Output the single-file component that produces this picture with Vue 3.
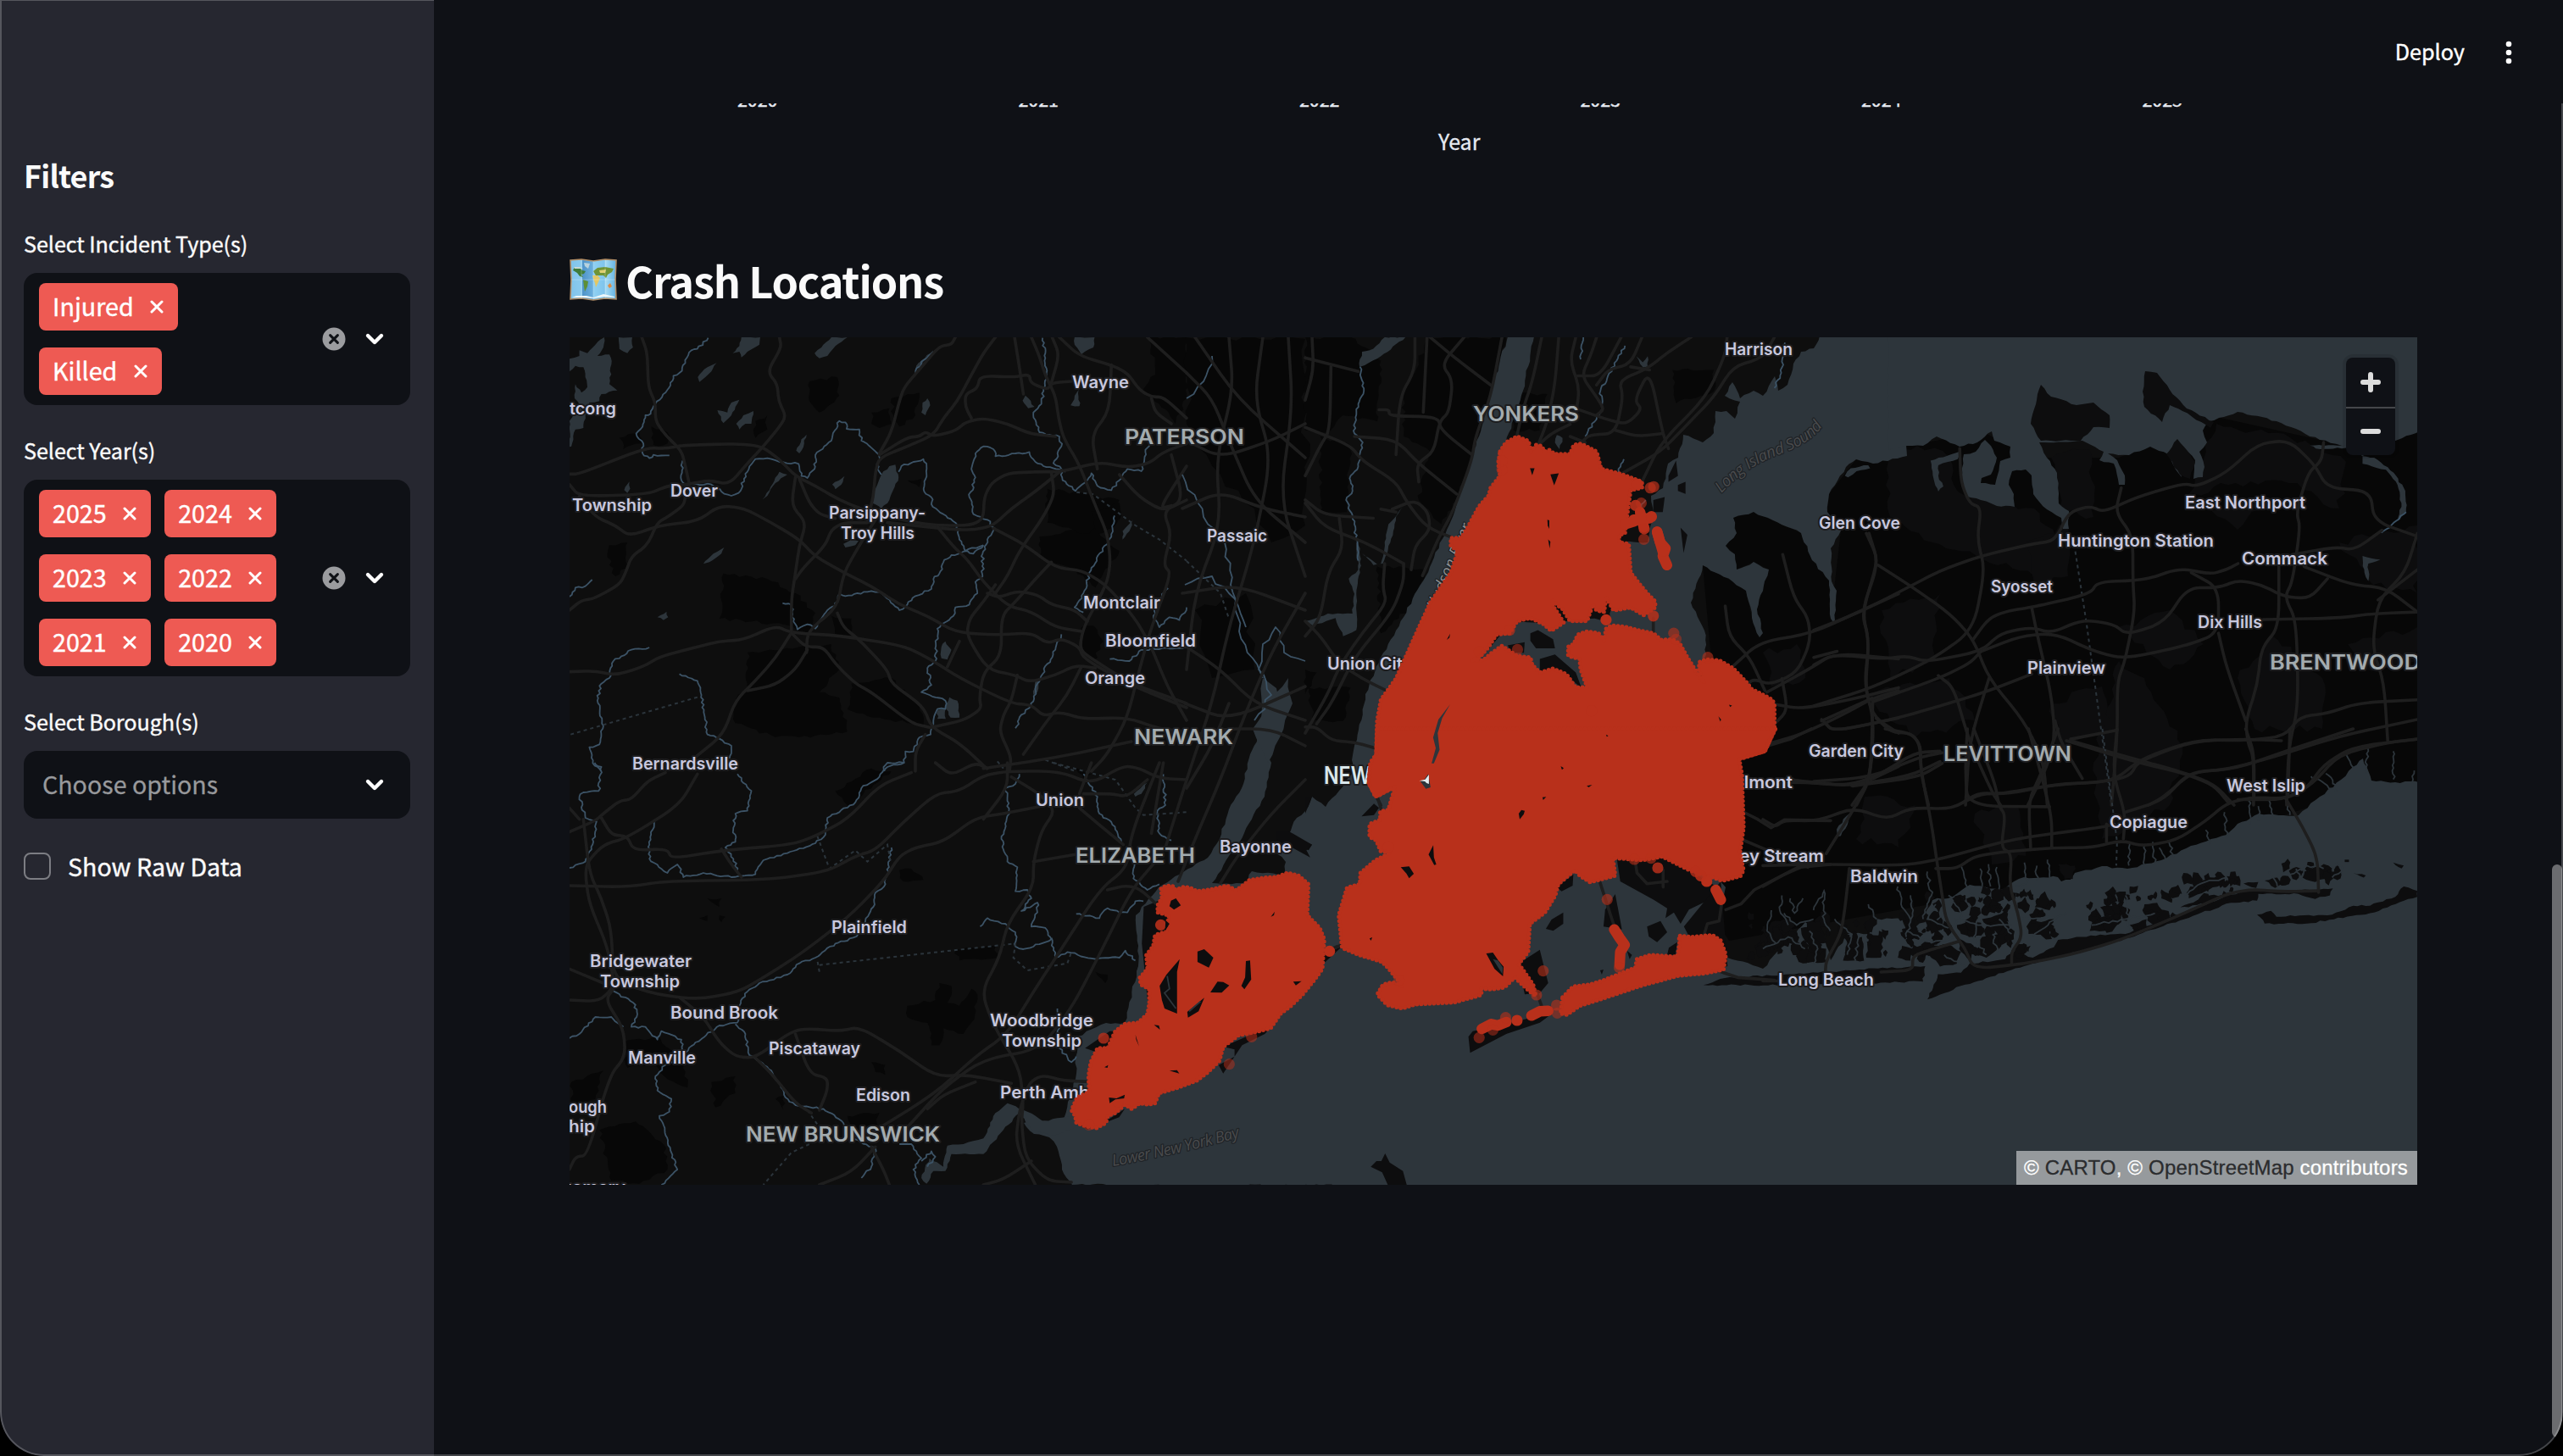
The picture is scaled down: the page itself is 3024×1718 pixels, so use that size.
<script setup>
const filters = [
  { label: 'Select Incident Type(s)', rows: [['Injured'], ['Killed']] },
  { label: 'Select Year(s)', rows: [['2025', '2024'], ['2023', '2022'], ['2021', '2020']] },
]
const axisYears = ['2020', '2021', '2022', '2023', '2024', '2025']

// Deterministic noise so the terrain looks the same on every load.
let seed = 7
const rand = () => {
  seed = (seed * 16807) % 2147483647
  return seed / 2147483647
}

// Turns path data made of M, L, H, V and z into lists of points.
function parse(d) {
  const subs = []
  let cur = null
  for (const [, cmd, args] of d.matchAll(/([MLHVz])([^MLHVz]*)/g)) {
    if (cmd === 'z') { cur.closed = true; continue }
    const n = (args.match(/-?[\d.]+/g) || []).map(Number)
    if (cmd === 'H') { cur.pts.push([n[0], cur.pts[cur.pts.length - 1][1]]); continue }
    if (cmd === 'V') { cur.pts.push([cur.pts[cur.pts.length - 1][0], n[0]]); continue }
    if (cmd === 'M') { cur = { pts: [], closed: false }; subs.push(cur) }
    for (let i = 0; i + 1 < n.length; i += 2) cur.pts.push([n[i], n[i + 1]])
  }
  return subs
}

// Adds small natural irregularities along coastlines and streams.
function wiggle(d, step, amp) {
  return parse(d).map(({ pts, closed }) => {
    const src = closed ? [...pts, pts[0]] : pts
    const out = [src[0]]
    for (let i = 1; i < src.length; i++) {
      const [ax, ay] = src[i - 1]
      const [bx, by] = src[i]
      const len = Math.hypot(bx - ax, by - ay)
      const n = Math.max(1, Math.round(len / step))
      for (let k = 1; k <= n; k++) {
        const t = k / n
        const o = k === n ? 0 : (rand() - 0.5) * 2 * amp
        out.push([ax + (bx - ax) * t - ((by - ay) / len) * o, ay + (by - ay) * t + ((bx - ax) / len) * o])
      }
    }
    return 'M' + out.map(([x, y]) => x.toFixed(1) + ' ' + y.toFixed(1)).join('L') + (closed ? 'z' : '')
  }).join('')
}

// Rounds the corners of a road.
function smooth(d) {
  return parse(d).map(({ pts }) => {
    if (pts.length < 3) return 'M' + pts.join('L')
    let s = 'M' + pts[0]
    for (let i = 1; i < pts.length - 1; i++) {
      const [x, y] = pts[i]
      const [px, py] = pts[i - 1]
      const [nx, ny] = pts[i + 1]
      s += `L${x + (px - x) * 0.4} ${y + (py - y) * 0.4}Q${x} ${y} ${x + (nx - x) * 0.4} ${y + (ny - y) * 0.4}`
    }
    return s + 'L' + pts[pts.length - 1]
  }).join('')
}

// Each tile keeps its own local grid; the transform places it on the map.
const rawTiles = [
  {
    id: 'morris',
    at: 'translate(660 390) scale(.47194 .33333)',
    dark: [
      'M1475 24H1568V240L1540 330 1500 260 1460 220 1490 140z',
      'M625 180L695 165 700 230 670 270 650 290 625 250z', 'M780 290L825 275 830 330 800 345 780 330z', 'M830 240L900 220 890 300 850 340 835 300z',
      'M150 380L200 360 205 400 160 420z', 'M230 340L270 360 270 400 235 405z', 'M410 860L520 880 590 930 640 1000 620 1070 560 1040 480 1030 400 1020z',
      'M470 1140L680 1110 700 1200 650 1280 700 1300 720 1420 600 1440 540 1440 440 1390 440 1320 470 1250z',
      'M730 1250L830 1230 900 1330 910 1400 800 1370 720 1340z', 'M680 1010L730 1020 730 1080 690 1085z', 'M1200 730L1330 690 1400 780 1340 910 1280 840 1200 800z',
      'M1220 560L1400 600 1400 670 1310 720 1220 680z', 'M1305 1050L1335 1045 1360 1100 1335 1170 1305 1130z', 'M125 760L170 750 170 830 140 870 125 830z', 'M1330 640L1400 610 1390 690 1350 720z', 'M870 530L905 525 900 555z', 'M490 320L520 300 520 350 490 380z',
    ],
    water: [
      'M25 100L50 90 50 70 70 80 90 50 112 24 110 60 95 90 125 85 130 120 125 190 145 212 105 225 100 250 75 255 65 300 60 345 40 350 30 410 25 412V320L50 260 38 240 40 190 55 220 70 200 60 130 40 125 25 145z',
      'M148 24H182L184 60 170 80 150 65z', 'M455 24H502L500 50 470 75 455 95 450 75 433 80 450 55z', 'M680 24H720L690 55 670 90 650 98 638 80 655 60z',
      'M393 115L380 145 350 182 346 165 370 130z', 'M450 245L440 270 430 300 410 328 395 282 420 290 430 255z', 'M485 285L480 330 465 330 450 350 442 330 460 300z', 'M920 240L927 265 915 300 905 290 908 255z', 'M618 368L612 400 600 435 592 425 605 385z',
      'M713 515L705 545 690 562 682 545z', 'M840 475L848 520 825 600 805 630 780 610 790 560 805 510 825 480z', 'M570 510L540 540 520 585 508 598 525 565 550 500z', 'M175 535L177 560 170 575 162 565z', 'M412 768L405 790 375 820 360 826 385 790z', 'M730 740L748 745 740 760 715 768 710 755z', 'M268 995L272 1015 260 1025 245 1015z', 'M965 1100L980 1130 970 1165 955 1160 955 1120z', 'M975 1298L995 1310 1000 1370 978 1370 965 1330z', 'M945 1345L965 1340 966 1375 945 1375z',
      'M1165 230L1188 270 1172 275 1158 248z', 'M1298 210L1300 268 1278 265z', 'M1288 24H1338L1335 60 1305 85 1288 50z', 'M1435 668L1425 710 1408 740 1408 710z', 'M935 70L900 130 890 150 892 125z', 'M1190 1240L1200 1230 1195 1280 1185 1290z',
    ],
    rivers: [
      'M372 26L345 65 330 70 300 150 285 160 270 210 240 260 228 295 215 300 208 340 192 365 210 400 208 435 225 452 235 440 275 442',
      'M308 460L305 530 315 545 380 545 405 570 430 585 448 575 470 500 490 455 530 455 550 465 598 472 605 515 620 522 638 490 640 440 680 390 700 320 715 325 718 348 750 350 755 390 780 415 800 448 795 490 805 510',
      'M848 500L855 480 885 465 910 455 918 480 912 570 930 590 930 615 960 650 990 680 1000 740 1015 780 1060 760',
      'M1265 500L1210 480 1190 465 1175 430 1140 435 1090 445 1085 420 1060 410 1040 435 1030 490 1040 520 1025 590 1035 650 1070 670 1088 700 1070 740 1058 790 1058 870 1040 890 1045 930 1025 970 990 980 985 1010 945 1055 940 1170 920 1195 930 1255 905 1280 925 1290 965 1310 965 1340 945 1340 935 1390 928 1430 900 1440 885 1490 865 1490 862 1530 820 1545 812 1560',
      'M1060 760L1035 790 1020 780 980 795 960 820 950 860 935 880 930 915 890 940 870 970 850 990 835 970 800 925 770 925 745 930 715 940 700 932 690 975 670 990 655 1020 640 1055 620 1040 595 1058 585 1030 580 970 558 965',
      'M82 882L65 905 40 910 25 942', 'M225 1122L180 1130 135 1170 125 1230 105 1250 95 1310 110 1400 100 1465 75 1475 88 1540 105 1560',
      'M300 1216L345 1240 355 1290 370 1430 400 1445 430 1470 425 1515', 'M1208 26L1215 80 1218 160 1205 260 1185 290 1200 360 1250 375 1255 410 1235 470 1255 490 1258 530 1290 568 1320 530 1330 505 1345 550 1380 565 1400 530 1420 490 1455 498 1465 430 1475 400',
      'M1388 655L1380 730 1330 840 1310 930 1288 980 1310 998', 'M1255 1075L1240 1130 1195 1250 1180 1330 1155 1360 1140 1408', 'M1522 912L1500 950 1485 1010 1500 1050 1525 1015 1550 1025 1568 980', 'M1376 1163L1425 1170 1455 1130 1568 1120', 'M935 75L905 110 890 150',
    ],
    dashes: ['M28 1430L345 1298', 'M1293 572L1335 580 1440 690 1500 740 1568 815', 'M1095 1525L1110 1550', 'M1215 1520L1290 1560'],
    roads: [
      'M25 508L50 508 215 415 270 418 310 405 495 400 550 455 590 515 640 550 700 600 770 640 870 675 940 690 1030 690 1060 665 1062 590 1080 540 1120 505 1190 500 1255 500 1350 465 1420 485 1475 470 1510 430 1568 400',
      'M206 24L220 80 222 200 240 255 240 320 265 370 305 425 315 480 325 545', 'M550 24L555 60 520 145 545 190 548 250 567 305 545 350 510 410 470 470 425 545 375 530 315 545 270 550 220 580 50 587 25 545',
      'M50 587L90 660 140 690 175 728 250 690 345 675 400 620 460 628 530 680 600 740 640 800 715 860 780 905 850 970 920 1010 990 1068 1090 1078 1180 1070 1220 1108 1255 1090 1300 1120 1310 1160 1420 1250 1568 1335',
      'M315 590L310 620 270 660 245 680 220 760 180 800 165 860 150 900 85 950 55 955 25 990', 'M590 520L580 620 617 680 600 760 590 860 580 950 580 1065', 'M600 525L625 610 650 650 690 665', 'M770 680L710 680 680 705 665 760 610 840 590 880', 'M790 670L750 760 710 860 695 980 620 1065 618 1140',
      'M990 24L980 50 950 55 905 130 862 200 850 250 830 360 800 435', 'M1090 24L1060 80 1025 170 995 250 960 310 935 370 870 410 800 450 790 500 785 590 770 670', 'M800 440L870 378 900 375 915 358 935 375 990 355 1015 325 1060 310 1120 330 1175 365 1240 375',
      'M1138 24L1150 130 1160 225', 'M1030 310L1015 270 1015 225 1045 205 1052 160 1135 165 1175 155 1178 185 1220 210 1232 185 1280 180', 'M1180 24L1200 90 1215 160 1240 230 1248 310 1260 380 1300 475 1340 620 1370 720 1378 820 1368 900 1310 1050 1300 1130 1340 1170 1430 1250 1568 1320',
      'M1232 24L1250 85 1230 185', 'M1250 24L1300 90 1380 122 1420 150 1450 210 1480 235 1510 235 1568 310', 'M1380 122L1375 285 1330 370 1345 490', 'M1480 240L1490 290 1530 330', 'M1230 505L1238 580 1210 660 1150 780 1120 870 1090 930', 'M1255 495L1190 570 1130 630 1085 690 1040 705 985 705 820 680',
      'M1085 700L1160 755 1240 840 1310 850 1370 905 1440 1020 1480 1120 1520 1260 1568 1380', 'M945 695L985 765 1020 810 1060 890 1120 975 1180 995 1240 1050 1305 1065', 'M1230 820L1190 880 1140 960 1105 1010 1105 1150 1060 1210 1050 1300 1055 1340 1010 1380 930 1405', 'M1090 900L1060 960 1025 1020 1018 1080 1070 1200 1140 1220 1175 1245 1240 1220 1290 1185 1340 1195',
      'M1070 930L1100 945 1145 922 1195 935 1230 970 1290 990 1320 1030', 'M25 1208L90 1205 140 1220 210 1190 250 1155 330 1125 400 1100 460 1095 540 1045 580 1070 700 1080 860 1115 930 1165 1000 1230 1130 1320 1180 1325 1210 1365 1250 1350 1310 1375 1420 1370 1500 1410 1568 1420',
      'M580 1070L540 1160 490 1240 440 1310 410 1430 340 1510', 'M620 1130L590 1200 540 1255 470 1275', 'M580 1070L615 1120 660 1120 690 1180 740 1250 780 1280 880 1390 925 1405', 'M695 1000L710 1050 750 1095 820 1200 830 1250 910 1330 930 1405 1000 1460 1068 1550',
      'M1305 1190L1270 1290 1220 1380 1160 1500', 'M1145 1220L1130 1310 1110 1360 1100 1420 1130 1510 1125 1560', 'M1000 1100L970 1190', 'M1430 1455L1250 1510 1060 1550', 'M1530 440L1560 600 1510 640 1530 720 1510 830 1530 860 1480 1050 1450 1200 1420 1370 1370 1500 1330 1560', 'M1470 24L1568 150', 'M1400 510L1450 590 1510 640 1568 600', 'M1530 620L1500 630 1568 480', 'M890 1560L890 1490 915 1430',
    ],
  },
  {
    id: 'middlesex',
    at: 'translate(660 900) scale(.47194 .33333)',
    dark: ['M690 100L780 20 830 30 760 110 720 150z', 'M870 860L940 840 950 780 980 790 970 850 1000 860 1030 800 1045 820 1030 920 1010 960 960 940 950 1000 930 1000 920 920 870 900z', 'M990 660L1090 650 1095 690 1000 700z', 'M160 990L240 970 310 1040 320 1150 270 1120 240 1060 170 1080z', 'M100 1300L190 1270 260 1350 270 1440 200 1490 130 1480z', 'M380 1130L440 1110 440 1170 390 1220z', 'M850 380L880 375 910 415 860 420z', 'M370 480L405 480 400 510z', 'M720 1250L800 1240 790 1290 730 1300z', 'M30 1130L110 1090 90 1190 30 1230z', 'M780 1060L815 1070 815 1105 790 1095z', 'M350 550L370 540 370 560z', 'M400 540L415 545 405 565z', 'M540 1190L560 1180 560 1230z', 'M1340 740L1370 750 1365 780z', 'M1290 20L1330 40 1310 60z'],
    water: ['M1210 1270L1170 1235 1120 1205 1090 1240 1060 1330 1010 1350 970 1355 960 1430 925 1400 905 1470 918 1490 935 1445 965 1445 980 1385 1060 1385 1110 1300 1150 1240 1180 1300 1235 1320 1290 1290 1290 1250 1200 1270z', 'M1436 110L1470 70 1455 110 1440 120z'],
    rivers: [
      'M88 0L105 15 98 100 60 105 50 120 65 195 93 208 85 280 65 350 25 372', 'M237 210L225 290 225 340 270 390 295 360 310 405 360 390 430 405 490 395 510 345 570 320 640 285 665 255 670 195 740 140 755 90 800 50 820 0 860 0', 'M445 40L480 100 470 170 440 180 435 230 440 280 415 300 435 340 450 400',
      'M1150 40L1140 75 1115 90 1125 180 1105 270 1120 350 1145 370 1140 455 1170 450 1180 480 1155 525 1195 495 1195 530 1180 580 1215 585 1230 625 1160 660 1140 650 1140 600 1115 570 1070 550 1052 580', 'M1230 620L1240 690 1270 670 1340 695 1400 690 1415 665 1440 700', 'M1292 535L1350 550 1370 515 1400 530 1420 530 1440 490 1460 490', 'M830 300L815 430 790 460 785 510 765 560 770 590 720 630 690 640 640 690 600 710 570 750 500 780 470 810 450 860 445 920 400 930 340 990 310 1030 265 1070 240 1110 245 1160 280 1190 275 1235 250 1250 280 1380 295 1440 255 1494',
      'M440 925L465 960 475 1035 530 1090 575 1200 600 1215 660 1225 710 1275 730 1330 790 1365 780 1430 755 1470', 'M135 808L185 850 195 890 180 935 215 935 245 980 255 950 305 980 310 1030', 'M25 975L50 960 90 900 130 900 160 935', 'M1245 870L1250 1010 1280 1060 1292 1040', 'M1440 350L1435 410 1470 450 1500 430', 'M1310 40L1345 120 1350 180 1380 210 1405 280', 'M850 1350L880 1350 905 1400 885 1440 900 1494', 'M1510 40L1515 150 1495 170 1500 250 1530 275', 'M905 1410L930 1375 940 1395 920 1430',
    ],
    dashes: ['M650 716L1140 640 1135 690 1170 735 1270 710 1280 670', 'M645 260L675 375 740 310 770 350 820 290 828 350', 'M640 1340L580 1380 510 1494', 'M620 1230L645 1280', 'M1235 0L1390 60 1440 160 1460 185 1568 175', 'M650 740L645 700'],
    roads: [
      'M265 35L220 65 180 130 150 135 110 180 90 205 25 245', 'M345 40L300 150 170 265 110 290 70 350 65 400 75 500 120 650 138 790 100 845 25 840', 'M60 200L75 390 105 480 130 590 135 770 240 820 350 838 450 810 510 760 600 680 720 550 810 420 850 330 890 300 960 280 1040 195 1110 180 1200 155',
      'M105 195L130 255 170 260 185 310 270 305 280 340 410 310 580 290 640 260 720 200 800 80 880 35', 'M25 435L170 440 270 418 520 415 670 385 740 330 790 310 860 210 940 110 1000 100 1060 45 1120 30 1250 30 1330 75 1410 10 1450 20 1500 55 1568 60', 'M405 305L430 360 455 405', 'M25 730L110 780', 'M138 795L115 840 160 940 165 1040 125 1110 70 1390 40 1395 25 1440',
      'M300 830L360 900 400 990 440 1040 490 1045 570 960 610 940 700 950 750 935 850 1020 940 1110 1020 1105 1130 1135', 'M490 1045L530 1100 590 1205 630 1240', 'M590 960L625 1100 670 1115 670 1160 650 1230', 'M1568 1130L1270 1130 1210 1105 1175 1130 1150 1230 1140 1350 1190 1494', 'M780 1310L940 1170 1040 1040 1120 960 1190 800 1250 670 1350 450 1420 370 1430 250 1500 0', 'M870 1290L960 1150 1060 1050 1200 1015 1280 870 1350 680 1430 450 1490 350',
      'M1120 0L1120 90 1060 200', 'M1130 50L1200 110 1240 170 1205 240 1185 350 1185 440 1120 570 1100 690 1055 810 1085 930 1150 1080 1160 1200 1155 1270 1165 1400 1220 1480 1280 1485', 'M1185 350L1290 325', 'M1370 450L1415 435 1450 445 1500 510', 'M1300 160L1350 220 1410 290', 'M940 0L980 45 1040 0 1070 20', 'M780 1360L810 1440 825 1494', 'M650 1494L730 1450 790 1360', 'M1060 1494L1110 1475 1180 1410', 'M920 1225L960 1175 1040 1130', 'M25 160L50 200', 'M1310 110L1380 110 1420 120 1470 60', 'M1330 0L1300 110', 'M1510 0L1480 250',
    ],
  },
  {
    id: 'gap',
    at: '',
    dark: ['M1400 398H1445L1540 400V620L1500 640 1480 600 1440 560 1400 500z', 'M1410 720L1470 700 1480 790 1430 800z'],
    water: ['M1490 800L1506 812 1512 850 1500 862 1488 850z', 'M1478 860L1520 800 1525 830 1510 870 1496 900z'],
    rivers: ['M1400 470L1420 450 1430 420', 'M1398 690L1430 680 1450 700 1470 740', 'M1540 780L1515 770 1505 740 1490 760 1485 790 1500 820 1480 850', 'M1395 560L1420 610 1445 640 1452 690 1462 745 1490 800'],
    dashes: ['M1400 662L1440 700 1450 730'],
    roads: ['M1400 440L1430 470 1450 520 1480 590 1540 640', 'M1410 398L1460 470 1540 540', 'M1400 520L1440 540 1500 520 1540 500', 'M1395 600L1440 580 1490 600 1540 610', 'M1490 398L1480 470 1500 540 1480 640 1450 740 1430 830 1400 920 1375 1000', 'M1520 398L1525 480 1510 590 1540 680', 'M1450 398L1455 460 1435 540 1440 620 1410 700 1400 790', 'M1395 700L1460 690 1540 720', 'M1398 830L1450 850 1540 810', 'M1398 870L1440 860 1500 860 1540 880', 'M1540 700L1500 770 1470 840 1440 920 1410 990 1390 1040', 'M1540 920L1500 960 1460 1010 1440 1042', 'M1395 760L1440 790 1480 830 1540 850', 'M1400 930L1430 880 1450 830'],
  },
  {
    id: 'sound',
    at: 'translate(1540 390) scale(.44643 .35714)',
    dark: ['M0 22H120L200 100 190 300 100 280 60 340 0 330z', 'M330 22H530L490 200 440 430 400 560 360 640 300 560 330 400 260 350 260 200z', 'M970 130L1080 130 1080 200 980 240z', 'M40 350L120 380 110 600 40 600z', 'M190 780L320 790 290 900 200 1000z', 'M10 1180L120 1180 100 1290 20 1290z', 'M0 1120L30 1130 0 1200z', 'M545 210L640 210 620 330 550 330z'],
    water: ['M265 22L200 85 145 120 140 135 150 70 180 60 210 22z', 'M0 960L60 935 125 935 130 870 115 820 140 790 135 700 145 720 145 800 135 870 135 990 100 1010 80 950 20 975z', 'M875 85L892 105 905 85 905 120 893 122z', 'M665 345L680 355 672 392 660 370z', 'M150 735L190 772 200 770 220 640 260 580 240 615 225 700 205 770 180 775z'],
    rivers: ['M145 120L155 200 135 260 130 340 152 370 140 450 120 480 125 530 108 560 130 640 140 760', 'M845 50L800 150 780 200 785 260 740 350', 'M735 22L728 95', 'M842 425L825 475', 'M1268 40L1258 140 1240 190', 'M900 560L875 600'],
    dashes: [],
    roads: ['M0 90L140 135', 'M68 120L65 330 40 380 0 480', 'M18 22L22 130 0 230', 'M0 320L120 380 150 430 240 500 270 570 320 650 400 690', 'M0 560L50 610 180 620', 'M0 570L50 650 160 700 260 770', 'M130 350L240 360 300 440 400 540', 'M290 22L290 130 250 220 240 410', 'M322 22L312 270', 'M195 262L222 262 222 282 350 285 360 330 440 410', 'M330 22L395 90 490 180', 'M420 22L360 110 390 165 380 270 355 300 340 400 295 440 300 500', 'M520 22L490 220 450 350 440 430 390 600 350 690 310 810', 'M230 590L290 560 325 600 330 660 290 710 280 790', 'M200 590L240 600', 'M90 620L100 720 60 800 40 950 0 1010', 'M210 770L205 850 215 900 150 1000 90 1110 60 1200 0 1330', 'M260 770L260 830 230 930 130 1080 70 1230 30 1300', 'M0 1310L30 1310 70 1355 130 1360 185 1380', 'M0 960L40 1010 90 1100 150 1150 215 1190', 'M625 22L600 170 575 260 560 345', 'M670 22L660 180 640 300 615 380', 'M715 22L700 100 725 190 715 280', 'M770 22L755 80 730 150 770 220 790 260 770 280', 'M835 22L780 150 720 150', 'M890 22L860 110 800 130 770 180', 'M720 260L800 295 850 310 890 260 870 230 910 130 945 340 960 390', 'M1020 22L960 70 905 125 830 165 840 220 820 340 750 345 730 370', 'M820 330L880 350 945 340', 'M860 120L910 130', 'M1240 22L1210 90 1130 120 1080 220 1010 310 940 400 840 470', 'M1115 22L1110 80 1060 220 940 370 890 500', 'M700 310L650 340 615 380', 'M920 950L920 1000', 'M700 350L740 370', 'M1568 870L1470 925 1340 1000 1200 1030 1130 1110', 'M1490 670L1515 770 1470 930 1490 1020 1480 1190 1505 1280 1568 1330', 'M1110 910L1120 1010 1175 1080 1215 1190', 'M1262 740L1290 880 1330 950 1335 1030 1300 1130 1230 1170 1180 1150 1160 1190', 'M1220 1195L1330 1120 1400 1065 1568 1085', 'M1240 1235L1310 1250 1440 1220 1568 1180', 'M1225 1365L1310 1335 1420 1270 1500 1215 1568 1190', 'M1370 1290L1395 1325 1568 1280', 'M1260 1150L1275 1255 1240 1300', 'M1500 1220L1495 1480 1445 1568', 'M1568 1440L1460 1505 1340 1495 1290 1485', 'M1568 1480L1450 1500', 'M190 1545L200 1568'],
  },
  {
    id: 'north-shore',
    at: 'translate(2140 390) scale(.45918 .35714)',
    dark: [],
    water: ['M1410 415L1440 420 1490 470 1520 530 1522 600 1500 630 1510 570 1500 510 1470 460 1410 440z', 'M1410 745L1456 757 1425 770 1425 828 1415 800z', 'M300 430L375 400 370 425 320 445 320 480 333 515 320 532 308 490z', 'M1275 380L1370 378 1368 388 1290 390z', 'M80 480L95 455 140 445 145 455 110 465 88 485z'],
    rivers: ['M1522 600L1490 635 1458 668'],
    dashes: ['M672 730L700 960 730 1240 765 1568'],
    roads: ['M0 990L120 930 240 850 330 790 430 745 560 705 620 695 655 600 710 580 745 600 830 550 950 505 985 515 1060 470 1140 375 1220 362 1285 440 1320 520 1430 530 1440 630 1551 680', 'M135 670L160 740 160 780 125 930 142 1030 130 1170 155 1290 145 1480 110 1568', 'M375 390L378 500 400 570 430 585 420 690 440 790 410 990 300 1090 150 1180 0 1240', 'M165 775L250 845 350 935 410 1020 450 1150 540 1290 590 1420 600 1568', 'M0 1105L50 1070 180 1085 240 1075 290 1095 430 1060 480 1000 560 980 610 1000 690 955 770 970 805 1005 900 965 960 850 1040 850 1090 825 1150 840 1210 880 1275 885 1320 820', 'M410 1020L450 950 500 925 560 915 710 870 730 830 850 825 940 785 1020 805 1060 790 1090 770', 'M0 1080L60 1060', 'M430 1060L530 1010 620 1000 720 1060 800 1085 960 1040 1040 1000 1040 850 970 800', 'M155 1225L320 1150 400 1100 430 1060', 'M20 1285L50 1325 200 1285 300 1250 440 1195 560 1135', 'M20 1290L150 1215', 'M320 1140L360 1180 400 1360 460 1530 480 1568', 'M450 1150L400 1360 390 1568', 'M560 915L575 1010 610 1200 620 1340 600 1440 550 1568', 'M790 520L775 600 820 680 820 830 825 930 800 1090 780 1160 780 1340 765 1568', 'M1310 370L1305 430 1270 470 1240 600 1250 650 1230 830 1210 880 1240 960 1245 1240 1220 1380 1215 1568', 'M1195 780L1195 980 1150 1050 1140 1170 1110 1290 1115 1360 1130 1410 1130 1568', 'M1040 1000L1060 1110 1110 1290', 'M1155 955L1350 950 1440 935 1551 930', 'M1260 780L1380 840 1470 850 1551 930', 'M1230 740L1340 715 1390 725 1460 660', 'M1551 670L1520 800 1450 890 1435 1050 1465 1160 1475 1360', 'M1551 790L1450 890', 'M1551 1220L1400 1230 1320 1265 1250 1275 1210 1340 1110 1355 980 1352 840 1415 770 1490 620 1500 500 1530 430 1530 370 1568', 'M660 1355L780 1400 950 1460 1030 1500 1080 1568', 'M1551 1285L1350 1340 1180 1410 1060 1450 970 1460 900 1540 860 1568', 'M1551 1350L1480 1360 1350 1400 1280 1500 1210 1550 1090 1550', 'M330 1395L270 1410 150 1475 0 1490', 'M100 1505L270 1475 330 1430', 'M160 1280L200 1328 250 1330 275 1370 275 1460 295 1568', 'M620 1290L635 1360 690 1480', 'M660 1350L780 1320'],
  },
  {
    id: 'south-shore',
    at: 'translate(2080 860) scale(.49745 .35077)',
    dark: [],
    water: ['M205 285L203 310 185 360 172 365 180 325z'],
    rivers: [],
    dashes: ['M805 0L840 380 838 460'],
    roads: ['M0 305L30 330 50 308 130 310 215 265 295 305 350 265 450 270 510 215 560 220 700 185 800 180 870 160 890 110 1020 40 1150 35 1230 40', 'M0 180L100 180 200 190 270 160 360 80 420 75', 'M210 190L350 158 420 110', 'M260 0L255 160 220 260 150 420', 'M290 0L350 15 372 50 375 140 400 320 412 440 425 560 435 650 480 740 500 808 620 790 730 760 850 710 1000 620 1100 555 1160 540 1230 548 1315 545', 'M485 0L480 130 485 260 680 262', 'M500 0L550 180 560 260 575 290 565 400 590 420 585 530 605 620 615 700 590 750 590 790', 'M700 0L660 150 630 240 635 400', 'M630 0L665 180 685 300 685 400', 'M0 460L150 455 340 460 430 435 590 370 810 330 830 320', 'M0 530L50 490 100 460', 'M410 470L460 470 500 430 560 415 690 400 780 400 850 375 900 395 980 375 1050 310 1100 250 1160 230 1240 235 1290 200 1330 120 1400 60 1551 35', 'M1240 235L1280 330 1315 430 1318 550', 'M720 40L880 110 1000 150 1070 190 1105 250', 'M860 280L950 240 1010 145 1120 135 1250 70 1400 0', 'M840 0L830 150 860 290 855 370', 'M1145 0L1165 80 1165 230', 'M1250 0L1245 230', 'M205 470L195 600 185 690 150 780 148 820', 'M465 715L370 755 355 770 355 812 280 818', 'M0 848L40 848', 'M815 320V380'],
  },
]
const tiles = rawTiles.map((t) => ({
  ...t,
  dark: t.dark.map((d) => wiggle(d, 14, 6)),
  water: t.water.map((d) => wiggle(d, 12, 2.5)),
  rivers: t.rivers.map((d) => wiggle(d, 9, 3.5)),
  roads: t.roads.map(smooth),
}))

const page = {
  ocean: wiggle('M1265 1398L1253 1380 1247 1353 1238 1342 1220 1338 1208 1325 1227 1322 1253 1325 1260 1300 1269 1273 1271 1223 1305 1207 1327 1207 1343 1140 1340 1080 1367 1047 1407 1023 1425 1012 1439 990 1450 955 1465 930 1475 890 1484 870 1500 900 1492 940 1468 983 1450 1010 1430 1042 1470 1042 1477 1028 1515 1032 1517 1017 1506 1007 1520 985 1530 965 1540 957 1548 940 1564 952 1580 933 1599 907 1595 897 1601 873 1611 819 1629 776 1647 744 1687 669 1710 619 1736 544 1759 461 1779 397H1810L1797 461 1777 522 1740 700 1745 745 1790 735 1900 730 1905 640 1944 640 1951 604 1948 585 1962 576 1968 547 1980 540 1986 513 2009 522 2022 511 2024 485 2037 485 2047 494 2053 474 2035 467 2044 451 2053 470 2069 461 2080 467 2094 444 2098 461 2109 454 2116 429 2125 415 2140 411 2147 396H2250V538L2210 547 2190 542 2178 551 2158 583 2156 604 2172 626 2160 647 2161 686 2167 697 2165 737 2160 730 2158 685 2138 661 2125 629 2069 604 2045 611 2049 629 2036 644 2047 654 2049 672 2069 663 2087 672 2082 686 2073 719 2080 747 2076 752 2067 729 2060 697 2044 686 2009 667 1995 711 2011 744 2013 772 2000 820 1990 1000 2030 1040 2036 1047 2028 1077 2012 1103 2038 1130 2080 1143 2110 1110 2130 1088 2150 1100 2160 1133 2180 1102 2205 1102 2214 1084 2244 1084 2254 1105 2280 1062 2304 1058 2324 1044 2360 1050 2388 1035 2428 1035 2432 1040 2443 1038 2448 1030 2480 1022 2510 1025 2550 1015 2585 998 2627 985 2640 972 2665 960 2712 962 2732 944 2762 920 2776 905 2788 895 2798 921 2826 923 2855 923V1402z', 6, 1.3),
  soundEast: wiggle('M2228 396V531L2250 526 2269 526 2285 515 2312 527 2333 522 2350 509 2353 520 2372 527 2372 540 2360 544 2354 572 2337 570 2338 564 2349 560 2356 540 2349 526 2342 519 2331 533 2317 536 2314 569 2321 586 2337 590 2356 597 2377 598 2376 583 2370 572 2374 556 2390 554 2397 561 2399 583 2415 601 2432 611 2434 624 2441 624V603L2429 594 2427 558 2415 540 2406 522 2457 520 2482 533 2477 543 2494 547 2500 572 2507 572V561L2498 543 2487 535 2512 537 2537 527 2558 536 2567 554 2574 563 2565 540 2569 520 2590 543 2588 565 2599 563 2601 551 2595 533 2604 522 2599 508 2606 497 2618 493 2640 486 2686 497 2737 519 2769 527 2787 538 2829 519 2855 509V396z', 6, 1),
  longIsland: 'M2009 667L2044 686 2060 697 2067 729 2076 752 2080 747 2073 719 2082 686 2087 672 2069 663 2049 672 2047 654 2036 644 2049 629 2045 611 2069 604 2125 629 2138 661 2158 685 2160 730 2172 626 2156 604 2158 583 2190 542 2250 526 2340 510 2400 540 2500 540 2620 493 2737 519 2852 509V940L2762 940 2640 980 2560 1030 2480 1040 2380 1050 2260 1070 2040 1110 2020 1080 2030 900z',
}

const lighter = [
  'M2230 535L2262 526 2300 540 2310 580 2400 600 2430 640 2400 680 2340 660 2280 640 2230 610z', 'M2615 500L2720 520 2768 545 2760 600 2700 570 2620 570 2580 590z', 'M2500 780L2530 800 2575 880 2560 950 2480 990 2470 900 2490 830z', 'M2680 750L2740 800 2740 860 2660 860 2640 800z', 'M2500 740L2560 720 2600 760 2560 790z', 'M2390 640L2440 620 2440 680 2400 690z', 'M2220 720L2290 700 2280 780 2230 800z', 'M2080 770L2120 760 2130 800 2090 810z', 'M2760 640L2852 620V700L2800 690z', 'M2420 830L2480 810 2490 850 2430 890z', 'M2420 540L2465 530 2470 610 2430 600z', 'M2200 820L2300 800 2330 850 2260 870z', 'M2600 600L2680 590 2640 625z', 'M2770 760L2852 740V780L2780 790z', 'M2200 940L2260 950 2240 1000 2190 990z', 'M2330 960L2380 950 2390 1010 2350 1020z',
].map((d) => wiggle(d, 9, 5))
const islands = [
  'M2396 500L2404 465 2408 454 2420 468 2450 478 2470 475 2489 490 2489 505 2470 504 2455 520 2408 520z', 'M2531 438L2545 440 2560 460 2580 482 2612 498 2608 505 2575 485 2560 478 2551 498 2530 480 2528 462z', 'M2556 536L2569 518 2590 545 2584 565 2572 560z',
].map((d) => wiggle(d, 6, 1))
const barrier = [
  'M-90 838L350 800 385 798 380 850 100 862 -141 862z', 'M390 910L405 860 415 825 470 820 490 790 575 775 590 745 640 770 690 735 700 710 800 692 860 690 960 635 1100 565 1150 540 1230 545 1352 537 1345 560 1310 572 1270 555 1175 555 1172 578 1110 585 1000 640 840 715 640 790 480 860z',
  'M1172 625L1205 612 1218 632 1350 625 1400 595 1440 595 1500 565 1520 530 1552 545V565L1440 620 1290 655 1190 655z', 'M1285 480L1330 455 1350 470 1345 500 1310 515 1280 500z', 'M1495 450L1520 460 1515 470z', 'M1400 485L1430 493 1425 500z',
  'M870 530L890 528 885 550 870 555z', 'M945 540L965 555 970 585 945 570z', 'M905 590L935 585 950 620 915 635 900 610z', 'M800 600L830 595 835 625 810 630z', 'M1040 510L1090 490 1095 520 1050 545 1010 570 1005 550z', 'M650 570L690 580 680 610 645 600z', 'M640 640L660 650 690 640 670 690 630 690 625 665z',
  'M780 640L850 620 850 650 810 680 775 680z', 'M1190 510L1220 500 1235 520 1215 535z', 'M1100 495L1118 500 1112 515z', 'M1380 440L1390 440 1390 448 1380 448z', 'M700 455L740 460 735 505 715 505z', 'M460 660L510 640 500 700 470 690z', 'M520 640L570 620 580 660 540 680z', 'M520 700L580 690 560 740 530 770 505 760z', 'M380 640L410 640 430 670 400 690z', 'M460 700L500 730 490 780 470 750z', 'M360 740L440 725 470 750 460 790 420 800 390 750z', 'M200 700L235 700 240 780 190 780z', 'M250 700L285 690 280 770 245 770z', 'M340 660L380 690 370 710 335 700z', 'M20 650L60 640 70 700 40 740 0 740z', 'M90 670L140 660 150 720 100 720z', 'M80 740L150 740 150 785 85 785z', 'M330 730L355 740 350 780 320 770z', 'M530 570L565 590 550 620 520 610z', 'M610 735L635 730 630 750z', 'M990 600L1060 560 1100 560 1010 600z', 'M1140 520L1175 515 1170 535z', 'M870 660L910 640 910 665 880 680z',
].map((d) => wiggle(d, 11, 3))
const creeks = ['M45 560L40 610 60 660M65 570L75 620 95 570M120 610L145 545 145 640 160 680M250 590L270 640M320 530L330 600 350 640M350 560L355 630 340 700M390 480L400 560 380 640M470 460L480 520 500 560M515 470L520 530M535 455L540 530M555 465L560 540M620 450L625 520 600 530M650 460V510M675 440L680 500M870 380L868 460M905 390V460M925 380L930 450M960 375L975 430M940 400L955 440M1095 280L1100 360M1050 340L1060 390M1155 230V320M1175 260V310M1200 240L1210 290M1240 240L1250 290M1300 160L1360 210M1380 80L1400 130M1435 65L1430 150M1495 75V170M1545 140L1540 180M1335 150L1360 190', 'M0 740L60 700 100 740M110 680L130 740 120 790M340 680L400 720 460 700M455 640L520 660 590 660M510 640L500 700 530 760M545 690L555 750M430 760L480 800M610 640L680 630M640 700L680 650 720 620M780 660L860 640 930 620M860 560L870 680M1000 560L1040 520 1100 500M1200 480L1220 530M20 610L10 680 30 720M50 620L80 660 120 640M170 640L210 690 200 760M225 690L220 780M410 590L390 640 440 670M440 560L470 620 450 690M560 640L590 690M1250 490L1290 460 1330 470M1360 450L1375 470 1350 500M1265 470L1280 510'].map((d) => wiggle(d, 10, 4))

// Salt-marsh islets between the mainland and the barrier beaches.
const marsh = []
const bands = [[-30, 170, 620, 780, 34], [180, 290, 650, 780, 16], [330, 480, 560, 770, 30], [480, 620, 540, 760, 34], [620, 700, 540, 690, 10], [770, 900, 560, 690, 22], [900, 1000, 540, 640, 8], [1000, 1120, 490, 580, 18], [1230, 1370, 455, 510, 12]]
for (const [x0, x1, y0, y1, count] of bands) {
  for (let i = 0; i < count; i++) {
    const cx = x0 + rand() * (x1 - x0)
    const cy = y0 + rand() * (y1 - y0)
    const r = 5 + rand() * 12
    const pts = []
    for (let k = 0; k < 9; k++) {
      const a = (k / 9) * Math.PI * 2
      const q = r * (0.5 + rand() * 0.8)
      pts.push((cx + Math.cos(a) * q).toFixed(1) + ' ' + (cy + Math.sin(a) * q * 1.6).toFixed(1))
    }
    marsh.push('M' + pts.join('L') + 'z')
  }
}

const staten = 'M375 215Q395 185 430 215L470 208 510 195 535 212 570 175 610 167 640 165 670 150 700 160 725 190 722 300 755 345 767 385 762 490 740 530 710 580 680 620 650 650 643 665 625 700 590 712 540 725 500 765 490 815 460 855 430 885 380 910 330 930 320 965 300 970 280 965 258 985 240 970 215 1000 195 1010 190 1035 165 1053 140 1048 112 1035 109 1010 99 990 114 945 146 925 144 870 150 820 168 770 195 770 215 710 240 685 275 680 300 650 305 610 304 560 282 545 280 520 300 490 297 440 315 410 320 370 355 355 354 320 357 300 326 290 328 260 338 240 336 205 350 195 370 198z'
const bronxManhattanQueens = 'M515 400L530 370 560 350 590 365 597 400 610 378 625 382 632 400 645 395 660 408 700 408 710 378 730 374 770 400 782 457 835 474 890 500 890 520 860 527 852 600 845 670 830 675 830 700 855 705 860 800 885 840 905 870 925 895 925 915 895 940 860 915 815 925 795 880 790 930 770 925 760 905 745 960 700 960 680 920 652 893 655 910 683 965 650 992 630 970 595 950 560 960 540 1000 505 1005 485 1045 460 1080 440 1090 470 1090 490 1068 520 1042 560 1075 595 1080 600 1105 620 1130 655 1117 690 1135 715 1180 745 1178 728 1120 725 1085 695 1075 695 1045 710 1035 720 1005 745 994 775 1000 790 1025 795 985 810 974 850 980 880 990 920 1000 940 1022 970 1020 990 1035 1010 1080 1035 1130 1055 1165 1040 1120 1042 1095 1060 1087 1095 1090 1130 1115 1168 1165 1180 1185 1205 1200 1235 1220 1240 1240 1240 1320 1215 1390 1145 1415 1150 1568H225L240 1505 185 1540 167 1490 172 1440 187 1410 190 1290 200 1220 240 1150 290 1010 330 900 385 800 403 730 385 710 385 685 412 685 425 660 460 580 485 545 490 520 515 480 510 440z'
const brooklyn = 'M215 0H1403L1370 80 1295 108 1303 160 1308 350 1297 440 1308 500 1298 522 1245 538 1200 520 1145 500 1095 470 1065 452 1040 458 1005 465 918 457 925 520 850 543 820 520 805 500 755 550 746 590 715 650 670 690 665 790 637 832 680 905 688 945 670 930 625 880 595 915 560 922 525 920 526 942 445 968 330 975 290 990 245 978 215 940 232 905 260 897 290 910 250 850 230 825 160 800 110 775 100 660 125 562 163 550 165 510 210 465 255 438 225 433 212 395 192 382 192 337 224 322 224 292 248 287 268 205 212 240 190 195 194 120 212 90z'
const rockaway = 'M768 950L800 912 850 905 890 890 985 845 990 815 1030 800 1110 807 1117 760 1115 732 1150 737 1215 730 1240 750 1255 800 1248 852 1195 865 1110 875 1000 910 880 958 820 980 780 1012 762 1008z'

const holesStaten = ['M432 428L450 420 474 450 462 485 432 465z', 'M560 462L571 460 574 527 556 562 548 550 558 520z', 'M385 455L350 510 332 550 338 600 345 630 378 648 378 500z', 'M450 592L405 642 407 662 435 640z', 'M466 573L485 535 500 536 516 548 496 574z', 'M362 248L375 240 388 265 370 280 358 268z', 'M348 318L358 330 346 356z', 'M317 688L330 690 333 705z', 'M358 850L378 848 384 860z', 'M198 945L218 948 240 935 238 948 215 952 200 965z', 'M685 535L707 533 692 548z', 'M626 305L636 287 634 300z', 'M268 722L278 765 270 740z', 'M186 838L196 830 194 840z']
const holesBrooklyn = ['M285 490L310 487 324 513 310 529 302 512z', 'M382 412L384 455 391 480 385 482 368 445z', 'M637 300L645 287 655 290 652 302 640 320z', 'M540 795L560 792 576 820 592 842 590 876 565 850z', 'M763 133L770 138 766 145z', 'M708 242L719 241 710 252z', 'M840 202L856 198 846 207z', 'M192 742L200 738 196 750z']
const holesBronx = ['M648 475L670 472 658 512 652 490z', 'M640 625L645 627 645 655 641 645z', 'M642 690L648 698 646 720z', 'M374 1022L383 1002 381 1015z', 'M1092 1275L1099 1285 1097 1292z', 'M594 455L606 455 600 478z', 'M1120 1236L1128 1239 1123 1244z', 'M675 1440L683 1446 680 1450z', 'M795 1335L801 1339 797 1342z']

const dots = [
  ['C', 335, 334, 0.9], ['C', 781, 427, 1], ['C', 575, 730, 0.55], ['C', 516, 827, 0.5], ['C', 184, 735, 0.8], ['C', 145, 1042, 0.5], ['C', 222, 960, 0.6],
  ['E', 901, 604, 0.6], ['E', 710, 857, 0.6], ['E', 1052, 492, 0.85], ['E', 1032, 458, 0.6], ['E', 982, 462, 0.6], ['E', 519, 1093, 0.55], ['E', 632, 1032, 1], ['E', 690, 942, 0.6], ['E', 750, 978, 0.6], ['E', 752, 1006, 0.5], ['E', 598, 1022, 0.6], ['E', 560, 1066, 0.5], ['E', 937, 845, 0.6], ['E', 1198, 540, 1], ['E', 1165, 505, 0.8], ['E', 1180, 520, 0.9], ['E', 280, 890, 0.5], ['E', 248, 418, 0.5],
  ['D', 561, 1054, 0.55], ['D', 460, 1062, 0.6], ['D', 795, 956, 1], ['D', 920, 943, 0.85], ['D', 974, 1000, 0.6], ['D', 980, 1020, 0.5], ['D', 1064, 1080, 0.6], ['D', 912, 520, 0.7], ['D', 921, 516, 0.7], ['D', 888, 570, 0.6], ['D', 873, 578, 0.9], ['D', 915, 615, 1], ['D', 896, 655, 0.9], ['D', 895, 690, 0.6], ['D', 520, 430, 0.5], ['D', 520, 460, 0.5], ['D', 757, 1256, 0.5], ['D', 878, 508, 1], ['D', 540, 990, 0.7],
]
const grids = { C: [1220, 980, 0.44643, 0.33333], D: [1540, 390, 0.44643, 0.35714], E: [1540, 860, 0.39541, 0.33333] }
const incidents = dots.map(([g, x, y, o]) => {
  const [ox, oy, sx, sy] = grids[g]
  return { x: ox + x * sx, y: oy + y * sy, o }
})

// text, left, baseline, width, kind
const labels = [
  ['tcong', 672, 489, 55], ['Dover', 791, 586, 56], ['Township', 675, 603, 94], ['Parsippany-', 978, 612, 114], ['Troy Hills', 992, 636, 87],
  ['Wayne', 1265, 458, 67], ['PATERSON', 1327, 524, 141, 'city'], ['Passaic', 1424, 639, 71], ['Montclair', 1278, 718, 91], ['Bloomfield', 1304, 763, 107],
  ['Orange', 1280, 807, 71], ['NEWARK', 1338, 878, 117, 'city'], ['Bernardsville', 746, 908, 125], ['Union', 1222, 951, 57], ['ELIZABETH', 1269, 1018, 141, 'city'],
  ['Bayonne', 1439, 1006, 85], ['Plainfield', 981, 1101, 89], ['Bridgewater', 696, 1141, 120], ['Township', 708, 1165, 94], ['Bound Brook', 791, 1202, 127],
  ['Manville', 741, 1255, 80], ['Piscataway', 907, 1244, 108], ['Edison', 1010, 1299, 64], ['Woodbridge', 1168, 1211, 122], ['Township', 1182, 1235, 94],
  ['Perth Amboy', 1180, 1296, 130], ['NEW BRUNSWICK', 880, 1347, 229, 'city'], ['ough', 671, 1313, 45], ['hip', 671, 1336, 31], ['gomery', 662, 1408, 76],
  ['YONKERS', 1738, 497, 125, 'city'], ['Harrison', 2035, 419, 80], ['Glen Cove', 2146, 624, 96], ['Union City', 1566, 790, 101], ['NEW YORK', 1562, 925, 126, 'capital'],
  ['Elmont', 2045, 930, 70], ['Valley Stream', 2016, 1017, 136], ['East Northport', 2578, 600, 142], ['Huntington Station', 2428, 645, 184], ['Commack', 2645, 666, 101],
  ['Syosset', 2349, 699, 73], ['Dix Hills', 2593, 741, 76], ['BRENTWOOD', 2678, 790, 178, 'city'], ['Plainview', 2392, 795, 92], ['Garden City', 2134, 893, 112],
  ['LEVITTOWN', 2293, 898, 151, 'city'], ['West Islip', 2627, 934, 93], ['Copiague', 2489, 977, 92], ['Baldwin', 2183, 1041, 80], ['Long Beach', 2098, 1163, 113],
]
</script>

<template>
  <div class="app">
    <aside class="sidebar">
      <h2 class="side-title">Filters</h2>
      <section v-for="f in filters" :key="f.label" class="field">
        <label class="label">{{ f.label }}</label>
        <div class="select">
          <div class="tags">
            <div v-for="(row, i) in f.rows" :key="i" class="tag-row">
              <span v-for="tag in row" :key="tag" class="tag">
                <span>{{ tag }}</span>
                <svg class="tag-x" viewBox="0 0 16 16"><path d="M2 2 14 14M14 2 2 14" /></svg>
              </span>
            </div>
          </div>
          <svg class="clear" viewBox="0 0 28 28"><circle cx="14" cy="14" r="13.5" /><path d="M9.6 9.6 18.4 18.4M18.4 9.6 9.6 18.4" /></svg>
          <svg class="chevron" viewBox="0 0 24 16"><path d="M4 4 12 12 20 4" /></svg>
        </div>
      </section>
      <section class="field">
        <label class="label">Select Borough(s)</label>
        <div class="select empty">
          <span class="placeholder">Choose options</span>
          <svg class="chevron" viewBox="0 0 24 16"><path d="M4 4 12 12 20 4" /></svg>
        </div>
      </section>
      <div class="check"><span class="box"></span><span>Show Raw Data</span></div>
    </aside>

    <main class="main">
      <header class="header">
        <span class="deploy">Deploy</span>
        <svg class="dots" viewBox="0 0 8 28"><circle cx="4" cy="4" r="3.3" /><circle cx="4" cy="14" r="3.3" /><circle cx="4" cy="24" r="3.3" /></svg>
      </header>
      <div class="content">
        <div class="axis"><span v-for="y in axisYears" :key="y">{{ y }}</span></div>
        <div class="axis-title">Year</div>
        <h1 class="title">
          <svg class="map-emoji" viewBox="0 0 56 50">
            <defs>
              <linearGradient id="fold" x1="0" x2="1">
                <stop offset="0" stop-color="#7fc3ea" /><stop offset=".25" stop-color="#8ccbee" /><stop offset=".26" stop-color="#4f93c8" /><stop offset=".5" stop-color="#6cb0de" /><stop offset=".51" stop-color="#8fd0f2" /><stop offset=".75" stop-color="#7fc4ec" /><stop offset=".76" stop-color="#a8dcf4" /><stop offset="1" stop-color="#63b2e2" />
              </linearGradient>
            </defs>
            <path d="M1 2 14 1 28 3 42 1 55 2 54 25 55 48 42 47 28 49 14 47 1 48 2 25z" fill="url(#fold)" stroke="#b08e68" stroke-width="1.6" />
            <path d="M4 14 6 10 12 11 15 14 19 15 17 18 14 19 16 22 12 21 9 17z" fill="#3f7c3a" />
            <path d="M5 10 12 10 16 12 6 12z" fill="#c8d9d6" />
            <path d="M17 5 24 6 22 12 18 9z" fill="#b8d2de" />
            <path d="M16 25 22 27 21 33 18 39 17 33z" fill="#5d8f35" />
            <path d="M28 15 33 11 42 10 52 12 50 16 45 19 43 23 40 20 36 20 31 20z" fill="#6f9436" />
            <path d="M27 20 33 20 36 23 34 28 31 34 30 29 28 24z" fill="#e3c765" />
            <path d="M45 32 48 29 50 33 47 35z" fill="#e08a44" />
            <path d="M35 14 43 13 42 17 36 17z" fill="#e0cf72" />
            <path d="M3 46 8 44 20 44 28 46 40 42 53 45 53 46 42 45 28 47 14 46z" fill="#eef8fb" />
            <path d="M14 2V47M28 3V48M42 2V47M2 25H54" stroke="#fff" stroke-opacity=".25" fill="none" />
          </svg>
          <span class="title-text">Crash Locations</span>
        </h1>
        <div class="map">
          <svg class="canvas" viewBox="672 398 2180 1000">
            <rect x="672" y="398" width="2180" height="1000" fill="#0e0e0e" />
            <g v-for="t in tiles" :key="t.id + '-dark'" :transform="t.at"><path v-for="(d, i) in t.dark" :key="i" :d="d" class="dark" /></g>
            <path :d="page.longIsland" class="dark" />
            <path v-for="(d, i) in lighter" :key="'l' + i" :d="d" class="land" />
            <path :d="page.ocean" class="water" />
            <path :d="page.soundEast" class="water" />
            <path v-for="(d, i) in islands" :key="'i' + i" :d="d" class="land" />
            <g transform="translate(2080 860) scale(.49745 .35077)">
              <path v-for="(d, i) in barrier" :key="i" :d="d" class="land" />
              <path v-for="(d, i) in marsh" :key="'m' + i" :d="d" class="land" />
              <path v-for="(d, i) in creeks" :key="'c' + i" :d="d" class="creek" />
            </g>
            <g transform="translate(1540 860) scale(.39541 .33333)" class="land">
              <path d="M930 460L1065 450 1145 500 1230 560 1215 600 1145 640 1120 690 1100 650 1075 670 1080 635 1040 605 940 540z" />
              <path d="M487 1090L500 1070 740 1005 700 1040 600 1080 492 1147z" /><path d="M635 832L700 782 712 840 725 900 700 935 655 940z" />
              <path d="M770 650L770 690 740 715 718 708 735 675z" /><path d="M750 560L800 515 798 555 765 575z" /><path d="M895 640L925 585 945 710 890 700z" />
              <path d="M1020 700L1060 680 1080 720 1050 755 1025 735z" /><path d="M1085 775L1110 755 1105 800 1080 800z" /><path d="M960 785L975 800 968 815z" /><path d="M880 855L890 852 885 870z" /><path d="M168 310L205 265 220 280 205 305z" />
              <path d="M0 400L20 410 10 430 0 425z" /><path d="M50 800L110 770 60 825z" /><path d="M0 240L20 240 0 300z" /><path d="M1130 700L1240 540 1260 840 1200 860z" />
            </g>
            <g transform="translate(1220 980) scale(.44643 .33333)" class="land">
              <path d="M890 1190L905 1170 918 1170 928 1143 940 1175 975 1205 985 1254H935L920 1210z" /><path d="M135 770L200 710 230 710 200 800z" /><path d="M500 765L630 690 610 720 550 760 500 860 488 830 530 800 530 775z" /><path d="M120 1040L200 1020 240 985 225 1015 140 1058z" /><path d="M640 30L730 95 720 70 735 50 670 0 640 0z" /><path d="M290 270L380 220 400 560 300 600 285 400z" /><path d="M755 450L800 405 770 465z" />
            </g>
            <g transform="translate(1540 390) scale(.44643 .35714)" class="land">
              <path d="M595 1000L615 990 655 1020 660 1050 610 1050 595 1025z" /><path d="M620 1085L660 1070 715 1130 730 1180 690 1140 620 1130z" /><path d="M535 1040L580 1030 578 1065 545 1065z" /><path d="M985 510L1005 500 1005 540 985 530z" /><path d="M960 480L980 430 985 480 960 500z" /><path d="M920 560L950 550 945 600 920 600z" /><path d="M992 652L1010 675 1000 735z" /><path d="M490 1010L520 1000 480 1060z" />
            </g>
            <g v-for="t in tiles" :key="t.id" :transform="t.at">
              <path v-for="(d, i) in t.water" :key="'w' + i" :d="d" class="water" />
              <path v-for="(d, i) in t.rivers" :key="'v' + i" :d="d" class="river" />
              <path v-for="(d, i) in t.dashes" :key="'b' + i" :d="d" class="border" />
              <path v-for="(d, i) in t.roads" :key="'r' + i" :d="d" class="road" />
            </g>
            <g transform="translate(1540 860) scale(.39541 .33333)" class="road">
              <path d="M880 545L925 710M690 930L705 980M985 470L990 510 1020 548 1080 540M1068 500V560M215 240L228 290M50 790L110 765M1255 640L1300 620 1340 570 1470 490 1568 480M1245 600L1235 680 1200 690 1190 730M1308 295L1350 320 1390 350 1430 322 1568 325M1300 390L1380 430 1500 490M1240 860L1290 880 1400 890M1380 60L1450 35 1510 0M1455 182L1568 195" />
            </g>
            <g class="labels">
              <text v-for="([t, x, y, w, kind], i) in labels" :key="i" :x="x" :y="y" :textLength="w" lengthAdjust="spacingAndGlyphs" :class="kind || 'town'">{{ t }}</text>
              <path id="bay" d="M1313 1376Q1390 1362 1466 1341" fill="none" /><path id="snd" d="M2031 582Q2060 550 2100 536T2153 498" fill="none" />
              <text class="sea"><textPath href="#bay" textLength="154">Lower New York Bay</textPath></text>
              <text class="sea"><textPath href="#snd" textLength="145">Long Island Sound</textPath></text>
              <text class="sea hudson" transform="translate(1694 720) rotate(-67)" textLength="108">Hudson River</text>
            </g>
            <g class="crash">
              <g transform="translate(1220 980) scale(.44643 .33333)"><path :d="staten" /></g>
              <g transform="translate(1540 390) scale(.44643 .35714)">
                <path :d="bronxManhattanQueens" /><path class="strip" d="M868 625L910 620M885 600L895 650M845 640L870 630" /><path class="strip" d="M930 665L938 700 952 720 945 745 956 775" /><path class="strip" d="M930 665L945 730" />
              </g>
              <g transform="translate(1540 860) scale(.39541 .33333)">
                <path :d="brooklyn" /><path :d="rockaway" />
                <path class="strip" d="M922 710L938 740 953 765 940 790 938 835" /><path class="strip" d="M527 1062L555 1045 575 1050 600 1038M675 1015L700 1000 725 998" /><path class="strip" d="M1225 570L1240 605" />
              </g>
            </g>
            <circle v-for="(p, i) in incidents" :key="'p' + i" :cx="p.x" :cy="p.y" r="6.6" fill="#b8301b" :fill-opacity="p.o" />
            <g transform="translate(1220 980) scale(.44643 .33333)"><path v-for="(d, i) in holesStaten" :key="i" :d="d" class="land" /><path d="M352 515L358 560 345 575 375 630M410 640L440 605" class="creek" /></g>
            <g transform="translate(1540 390) scale(.44643 .35714)"><path v-for="(d, i) in holesBronx" :key="i" :d="d" class="land" /><path class="water" d="M383 1235L352 1285 338 1345 345 1380 334 1430 340 1430 355 1385 350 1330 362 1280z" /></g>
            <g transform="translate(1540 860) scale(.39541 .33333)"><path v-for="(d, i) in holesBrooklyn" :key="i" :d="d" class="land" /><path class="water" d="M343 185L355 180 367 160 374 207 360 212z" /><path fill="#e6eef0" d="M340 184L358 179 369 162 369 195 362 192 357 186z" /><path class="water" d="M560 815L575 820 590 845 588 868z" /></g>
          </svg>
          <div class="zoom">
            <button><svg viewBox="0 0 24 24"><path d="M12 3V21M3 12H21" /></svg></button>
            <button><svg viewBox="0 0 24 24"><path d="M3 12H21" /></svg></button>
          </div>
          <div class="credit">© <a>CARTO</a>, © <a>OpenStreetMap</a> contributors</div>
        </div>
      </div>
    </main>
    <div class="scrollbar"></div>
    <div class="frame"></div>
  </div>
</template>

<style>
body { background: #000; }
</style>

<style scoped>
.app { position: relative; display: flex; width: 3024px; height: 1718px; overflow: hidden; background: #0f1116; border-radius: 0 0 52px 52px; color: #fafafa; font-family: "Noto Sans CJK SC", "Noto Sans CJK JP", sans-serif; box-sizing: border-box; }
.sidebar { flex: none; width: 512px; box-sizing: border-box; padding: 176px 28px 0; background: #262730; }
.side-title { margin: 0 0 39px; font-size: 36px; line-height: 60px; font-weight: 700; letter-spacing: -.8px; }
.field { margin-bottom: 42px; }
.label { display: block; height: 47px; line-height: 24px; font-size: 25.2px; letter-spacing: -.08px; -webkit-text-stroke: .4px; }
.select { display: flex; align-items: center; box-sizing: border-box; padding: 12px 30px 12px 18px; background: #0f1116; border-radius: 16px; }
.field + .field .label { margin-top: -1px; }
.tags { flex: 1; display: flex; flex-direction: column; gap: 20px; }
.tag-row { display: flex; gap: 16px; }
.tag { display: flex; align-items: center; height: 56px; padding: 0 17px 0 16px; border-radius: 8px; background: #ee5a53; color: #fff; font-size: 28.7px; line-height: 54px; -webkit-text-stroke: .4px; }
.tag > span { height: 56px; }
.tag-x { width: 16px; height: 16px; margin-left: 19.5px; fill: none; stroke: #fff; stroke-width: 3; stroke-linecap: round; }
.clear { width: 28px; height: 28px; margin-right: 22px; fill: #9b9c9f; stroke: none; }
.clear path { stroke: #0f1116; stroke-width: 3; stroke-linecap: round; }
.chevron { width: 24px; height: 16px; fill: none; stroke: #fff; stroke-width: 4.4; stroke-linecap: round; stroke-linejoin: round; }
.empty { height: 80px; justify-content: space-between; padding-left: 22px; }
.placeholder { height: 56px; color: #98999c; font-size: 28.6px; line-height: 54px; -webkit-text-stroke: .3px; }
.check { display: flex; align-items: center; gap: 20px; margin-top: -2px; height: 32px; font-size: 28.6px; line-height: 30px; -webkit-text-stroke: .4px; }
.box { box-sizing: border-box; width: 32px; height: 32px; border: 2px solid #7c7d83; border-radius: 8px; }
.main { flex: 1; display: flex; flex-direction: column; }
.header { position: relative; z-index: 1; display: flex; flex: none; align-items: center; justify-content: flex-end; height: 122px; box-sizing: border-box; padding: 2px 60px 0 0; gap: 48px; background: #0f1116; font-size: 25.2px; line-height: 116px; }
.dots { width: 8px; height: 28px; fill: #fff; }
.deploy { height: 120px; color: #fff; -webkit-text-stroke: .4px; }
.content { display: flex; flex-direction: column; margin-top: -24px; padding: 0 172px 0 160px; }
.axis { display: flex; width: 1990px; margin-left: 56px; height: 36px; line-height: 37px; font-size: 21.4px; color: #e6eaf1; -webkit-text-stroke: .4px; }
.axis span { width: 331.5px; text-align: center; }
.axis-title { height: 40px; margin: 15px 0 0 1025px; line-height: 34px; font-size: 25px; color: #e6eaf1; -webkit-text-stroke: .3px; }
.title { display: flex; align-items: center; gap: 11px; height: 80px; margin: 101px 0 28px; font-size: 50.4px; line-height: 80px; font-weight: 700; letter-spacing: -1.12px; }
.title-text { position: relative; top: 1px; margin-left: -1px; }
.map-emoji { width: 56px; height: 50px; }
.map { position: relative; width: 2180px; height: 1000px; overflow: hidden; }
.canvas { display: block; width: 2180px; height: 1000px; }
.dark { fill: #070707; }
.land, .land path { fill: #0d0d0e; }
.water { fill: #2d353b; }
.creek { fill: none; stroke: #2d353b; stroke-width: 1.8px; vector-effect: non-scaling-stroke; }
.road, .road path { fill: none; stroke: #1e1e1e; stroke-width: 3.6px; stroke-linecap: round; stroke-linejoin: round; vector-effect: non-scaling-stroke; }
.river { fill: none; stroke: #3c5366; stroke-width: 1.8px; stroke-linejoin: round; vector-effect: non-scaling-stroke; }
.border { fill: none; stroke: #2b343b; stroke-width: 2px; stroke-dasharray: 4 4; vector-effect: non-scaling-stroke; }
.labels text { font-family: Inter, "Noto Sans", sans-serif; font-weight: 600; stroke: #1d1d1f; stroke-width: 4px; stroke-linejoin: round; paint-order: stroke; }
.labels .town { font-size: 19.5px; fill: #c8c8de; }
.labels .city { font-size: 23.8px; fill: #a3abae; }
.labels .capital { font-size: 28px; fill: #dbe8ec; }
.labels .sea { font-family: "Open Sans", sans-serif; font-style: italic; font-weight: 400; font-size: 18.5px; fill: #4a4b4d; stroke: #1f2327; stroke-width: 2.5px; }
.labels .hudson { fill: #8d9092; font-size: 18px; }
.crash path { fill: #b8301b; stroke: #b8301b; stroke-width: 5px; stroke-linecap: round; stroke-dasharray: 0 5; vector-effect: non-scaling-stroke; }
.crash .strip { fill: none; stroke-width: 12.5px; stroke-dasharray: none; stroke-linejoin: round; }
.zoom { position: absolute; top: 24px; right: 26px; display: flex; flex-direction: column; width: 58px; border-radius: 8px; background: #0f1116; box-shadow: 0 0 0 4px rgba(0, 0, 0, .1); }
.zoom button { display: flex; align-items: center; justify-content: center; height: 57.5px; padding: 0; border: 0; background: none; }
.zoom button + button { border-top: 2px solid #45474b; }
.zoom svg { width: 24px; height: 24px; fill: none; stroke: #dcdcdc; stroke-width: 6; stroke-linecap: round; }
.credit { position: absolute; right: 0; bottom: 0; height: 40px; width: 473px; box-sizing: border-box; padding-left: 9px; background: #969a9d; color: #fff; font: 24px/39px "Liberation Sans", Arial, sans-serif; letter-spacing: .17px; white-space: nowrap; -webkit-text-stroke: .3px; }
.credit a { color: #2b2c2e; }
.scrollbar { position: absolute; right: 1px; top: 1020px; width: 12px; height: 676px; border-radius: 6px; background: #6b6c6f; }
.frame { position: absolute; inset: 0; box-sizing: border-box; border: 2px solid rgba(255, 255, 255, .22); border-top-width: 1px; border-radius: 0 0 52px 52px; }
</style>
